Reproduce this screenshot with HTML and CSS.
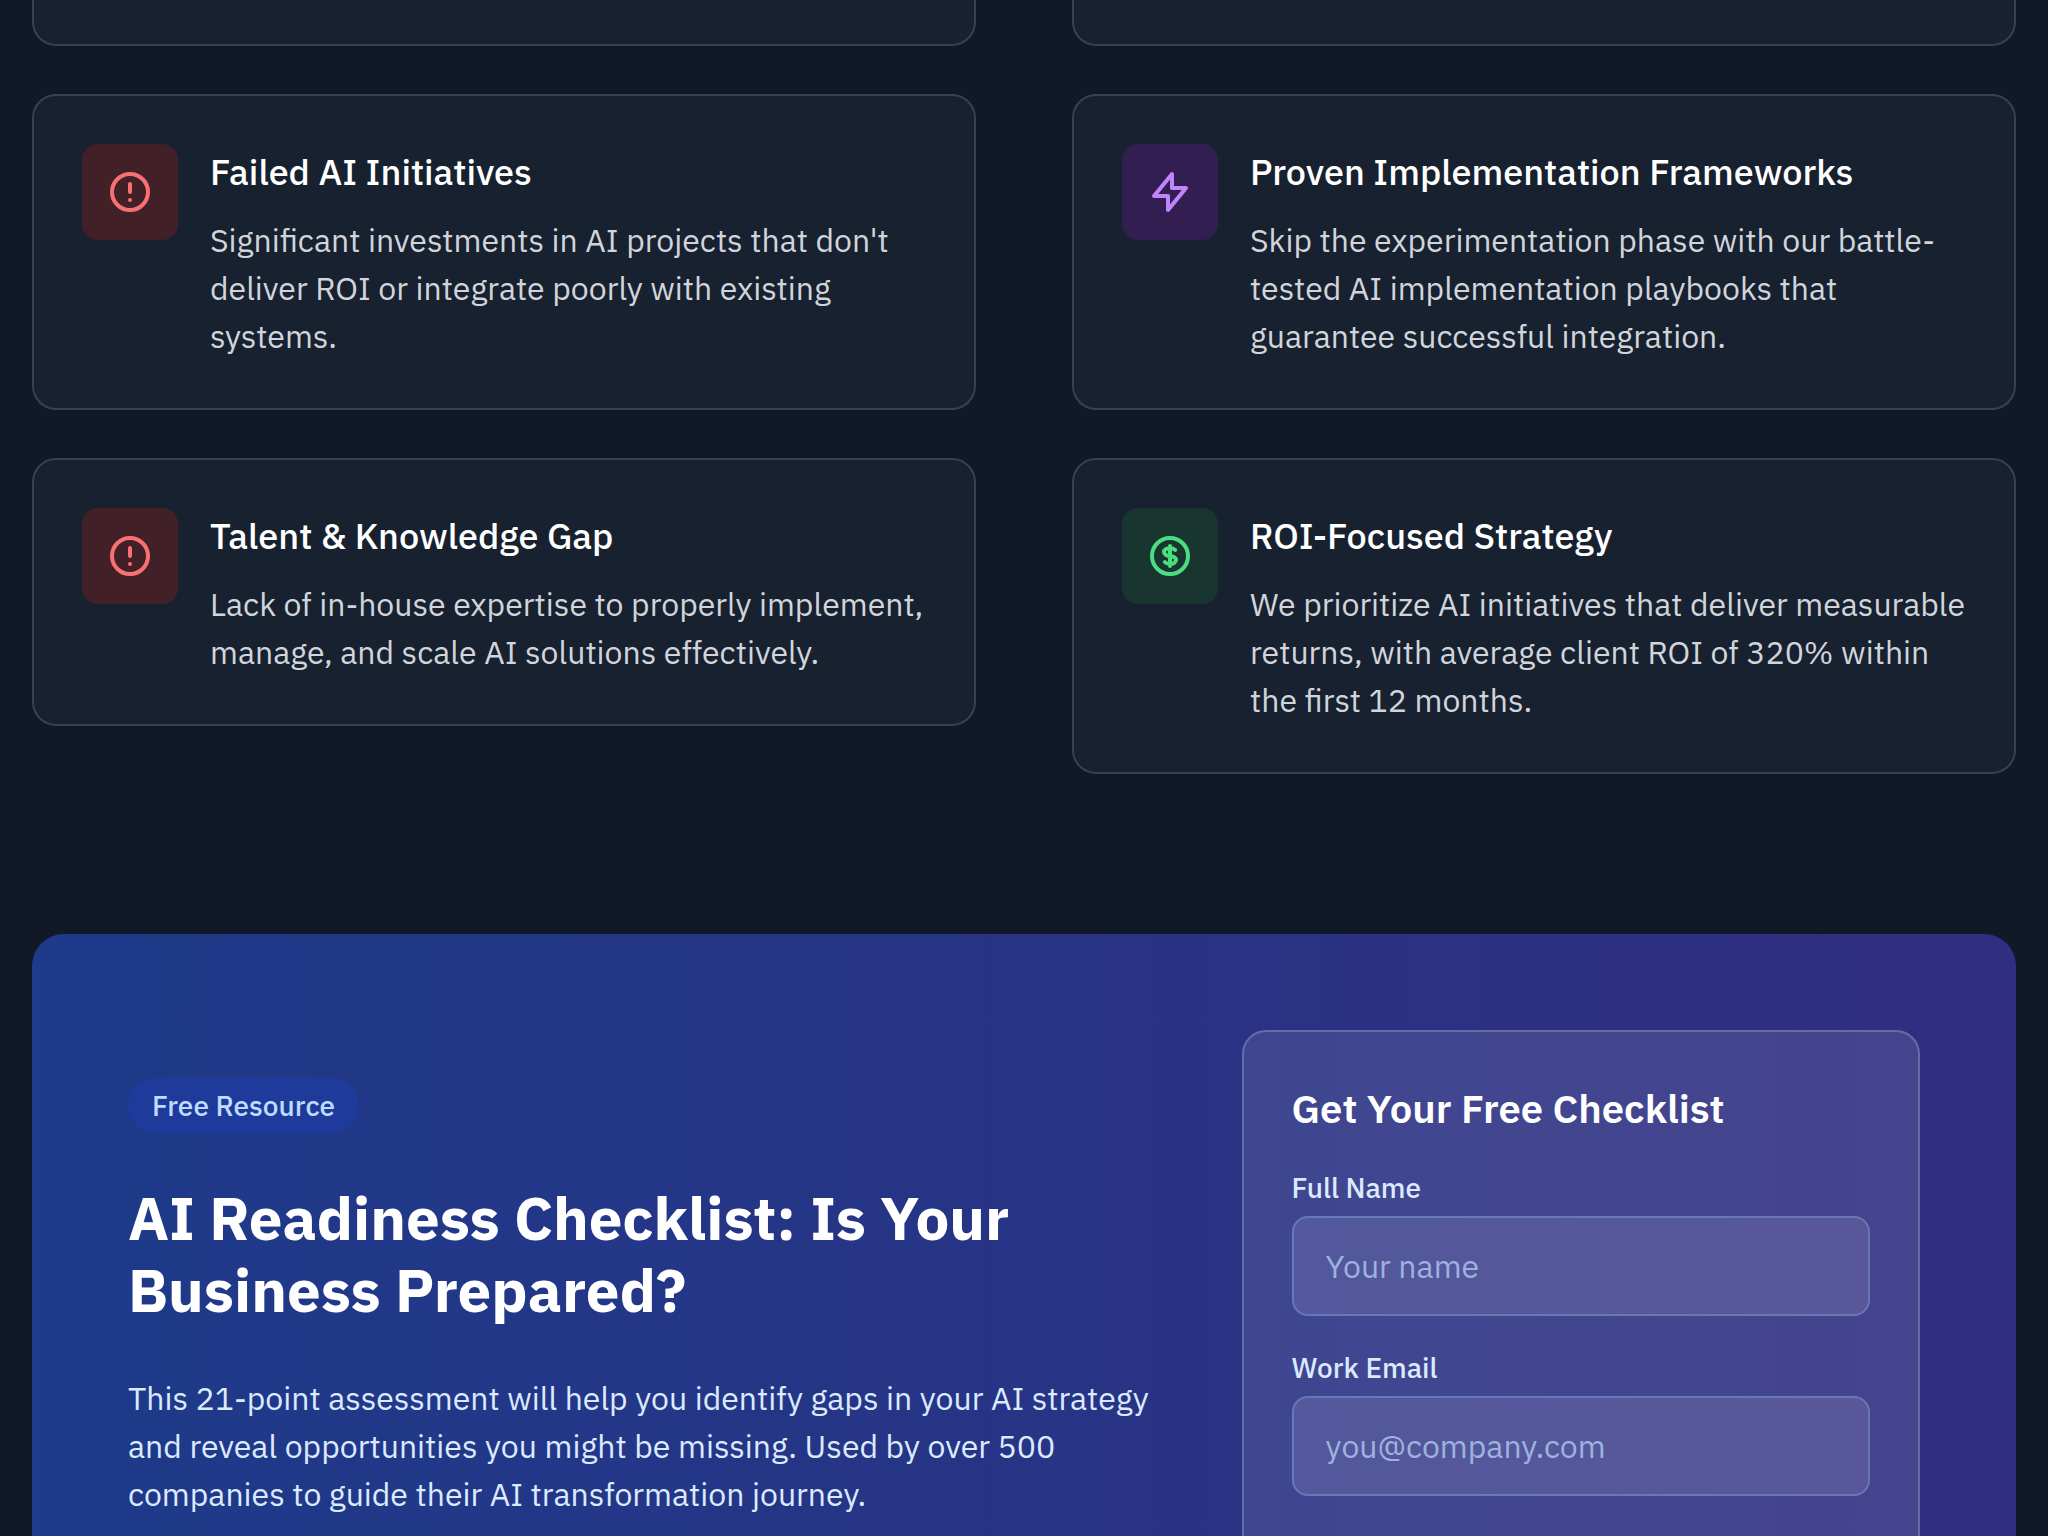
FILE: index.html
```
<!DOCTYPE html>
<html lang="en">
<head>
<meta charset="utf-8">
<meta name="viewport" content="width=device-width, initial-scale=1">
<title>AI Readiness Checklist</title>
<link rel="stylesheet" href="styles.css">
</head>
<body>
<main class="page">
  <section class="compare">
    <div class="column">
      <div class="card card-tail"></div>
      <article class="card">
        <div class="icon icon-red">
          <svg viewBox="0 0 24 24" aria-hidden="true"><path d="M12 8v4m0 4h.01M21 12a9 9 0 11-18 0 9 9 0 0118 0z"/></svg>
        </div>
        <div class="card-body">
          <h3 class="card-title">Failed AI Initiatives</h3>
          <p class="card-text">Significant investments in AI projects that don't deliver ROI or integrate poorly with existing systems.</p>
        </div>
      </article>
      <article class="card">
        <div class="icon icon-red">
          <svg viewBox="0 0 24 24" aria-hidden="true"><path d="M12 8v4m0 4h.01M21 12a9 9 0 11-18 0 9 9 0 0118 0z"/></svg>
        </div>
        <div class="card-body">
          <h3 class="card-title">Talent &amp; Knowledge Gap</h3>
          <p class="card-text">Lack of in-house expertise to properly implement, manage, and scale AI solutions effectively.</p>
        </div>
      </article>
    </div>
    <div class="column">
      <div class="card card-tail"></div>
      <article class="card">
        <div class="icon icon-purple">
          <svg viewBox="0 0 24 24" aria-hidden="true"><path d="M13 10V3L4 14h7v7l9-11h-7z"/></svg>
        </div>
        <div class="card-body">
          <h3 class="card-title">Proven Implementation Frameworks</h3>
          <p class="card-text">Skip the experimentation phase with our battle-tested AI implementation playbooks that guarantee successful integration.</p>
        </div>
      </article>
      <article class="card">
        <div class="icon icon-green">
          <svg viewBox="0 0 24 24" aria-hidden="true"><path d="M12 8c-1.657 0-3 .895-3 2s1.343 2 3 2 3 .895 3 2-1.343 2-3 2m0-8c1.11 0 2.08.402 2.599 1M12 8V7m0 1v8m0 0v1m0-1c-1.11 0-2.08-.402-2.599-1M21 12a9 9 0 11-18 0 9 9 0 0118 0z"/></svg>
        </div>
        <div class="card-body">
          <h3 class="card-title">ROI-Focused Strategy</h3>
          <p class="card-text">We prioritize AI initiatives that deliver measurable returns, with average client ROI of 320% within the first 12 months.</p>
        </div>
      </article>
    </div>
  </section>

  <section class="cta">
    <div class="cta-copy">
      <span class="badge">Free Resource</span>
      <h2 class="cta-title">AI Readiness Checklist: Is Your Business Prepared?</h2>
      <p class="cta-text">This 21-point assessment will help you identify gaps in your AI strategy and reveal opportunities you might be missing. Used by over 500 companies to guide their AI transformation journey.</p>
    </div>
    <form class="form">
      <h3 class="form-title">Get Your Free Checklist</h3>
      <div class="field">
        <label class="label" for="name">Full Name</label>
        <input class="input" id="name" type="text" placeholder="Your name">
      </div>
      <div class="field">
        <label class="label" for="email">Work Email</label>
        <input class="input" id="email" type="email" placeholder="you@company.com">
      </div>
    </form>
  </section>
</main>
</body>
</html>
```
FILE: styles.css
```
*, *::before, *::after { box-sizing: border-box; }

body {
  margin: 0;
  background: #111827;
  color: #fff;
  font-family: "IBM Plex Sans", "Noto Sans", sans-serif;
  font-size: 32px;
  line-height: 48px;
}

h2, h3, p { margin: 0; }

.page {
  display: flex;
  flex-direction: column;
  gap: 160px;
  height: 100vh;
  padding: 0 32px;
  overflow: hidden;
}

.compare {
  display: grid;
  grid-template-columns: 1fr 1fr;
  gap: 96px;
  align-items: start;
}

.column {
  display: flex;
  flex-direction: column;
  gap: 48px;
}

.card {
  display: flex;
  align-items: flex-start;
  gap: 32px;
  padding: 48px;
  border: 2px solid #374151;
  border-radius: 24px;
  background: #18212f;
}

.card-tail {
  height: 46px;
  padding: 0;
  border-top: 0;
  border-radius: 0 0 24px 24px;
}

.icon {
  display: flex;
  flex: none;
  padding: 24px;
  border-radius: 16px;
}

.icon svg {
  width: 48px;
  height: 48px;
  fill: none;
  stroke: currentColor;
  stroke-width: 2;
  stroke-linecap: round;
  stroke-linejoin: round;
}

.icon-red { background: #412027; color: #f87171; }
.icon-purple { background: #321e51; color: #c084fc; }
.icon-green { background: #18352f; color: #4ade80; }

.card-body {
  flex: 1;
  min-width: 0;
}

.card-title {
  margin-bottom: 16px;
  font-size: 36px;
  font-weight: 500;
  line-height: 56px;
}

.card-text { color: #d1d5db; }

.cta {
  display: grid;
  flex: 1 0 auto;
  grid-template-columns: repeat(5, 1fr);
  gap: 64px;
  padding: 96px 96px 0;
  border-radius: 32px 32px 0 0;
  background: linear-gradient(to right, #1e3a8a, #312e81);
}

.cta-copy {
  grid-column: span 3;
  padding-top: 48px;
}

.badge {
  display: block;
  width: fit-content;
  padding: 8px 24px;
  border-radius: 28px;
  background: #1e3b9c;
  color: #bfdbfe;
  font-size: 28px;
  font-weight: 500;
  line-height: 40px;
}

.cta-title {
  margin: 48px 0;
  font-size: 60px;
  font-weight: 700;
  line-height: 72px;
}

.cta-text { color: #dbeafe; }

.form {
  display: flex;
  flex-direction: column;
  grid-column: span 2;
  gap: 32px;
  padding: 48px;
  border: 2px solid rgba(255, 255, 255, 0.2);
  border-bottom: 0;
  border-radius: 24px 24px 0 0;
  background: rgba(255, 255, 255, 0.1);
}

.form-title {
  font-size: 40px;
  font-weight: 600;
  line-height: 56px;
}

.field {
  display: flex;
  flex-direction: column;
  gap: 8px;
}

.label {
  color: #dbeafe;
  font-size: 28px;
  font-weight: 500;
  line-height: 40px;
}

.input {
  width: 100%;
  padding: 24px 32px;
  border: 2px solid rgba(147, 197, 253, 0.3);
  border-radius: 16px;
  background: rgba(255, 255, 255, 0.1);
  color: #fff;
  font: inherit;
  line-height: 48px;
}

.input::placeholder {
  color: rgba(191, 219, 254, 0.7);
  opacity: 1;
}
```
